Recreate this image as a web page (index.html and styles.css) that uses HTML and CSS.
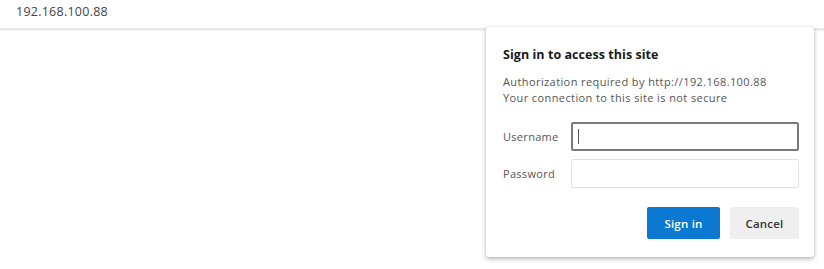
FILE: index.html
```html
<!DOCTYPE html>
<html>
<head>
<meta charset="utf-8">
<link rel="stylesheet" href="styles.css">
</head>
<body>
<div class="topbar"><span class="addr">192.168.100.88</span></div>
<div class="sep"></div>
<div class="dialog">
  <div class="title">Sign in to access this site</div>
  <div class="info">
    <div>Authorization required by http://192.168.100.88</div>
    <div>Your connection to this site is not secure</div>
  </div>
  <div class="row first">
    <label class="lbl">Username</label>
    <div class="input focused"><span class="caret"></span></div>
  </div>
  <div class="row">
    <label class="lbl">Password</label>
    <div class="input"></div>
  </div>
  <div class="buttons">
    <div class="btn primary">Sign in</div>
    <div class="btn secondary">Cancel</div>
  </div>
</div>
</body>
</html>
```
FILE: styles.css
```css
html, body {
  margin: 0;
  padding: 0;
  background: #ffffff;
  font-family: "Open Sans", "Noto Sans", sans-serif;
  color: #333;
}
body {
  width: 824px;
  height: 269px;
  position: relative;
  overflow: hidden;
}
.topbar {
  height: 28px;
  display: flex;
  align-items: center;
  padding-left: 16px;
}
.addr {
  font-size: 12.5px;
  color: #444;
  letter-spacing: 0.25px;
  margin-top: -5px;
}
.sep {
  height: 3px;
  background: linear-gradient(to bottom, #e4e4e4, #f3f3f3);
}
.dialog {
  position: absolute;
  left: 486px;
  top: 27px;
  width: 328px;
  height: 230px;
  box-sizing: border-box;
  background: #fff;
  border-radius: 3px;
  box-shadow: 0 2px 5px rgba(0,0,0,0.28), 0 0 2px rgba(0,0,0,0.12);
  padding: 19px 15px 0 17px;
}
.title {
  font-size: 12.5px;
  font-weight: 700;
  color: #1a1a1a;
  line-height: 18px;
  letter-spacing: 0.05px;
}
.info {
  margin-top: 10px;
  font-size: 11px;
  line-height: 16px;
  color: #555;
  letter-spacing: 0.4px;
}
.row {
  display: flex;
  align-items: center;
  margin-top: 8px;
}
.row.first {
  margin-top: 16px;
}
.lbl {
  width: 68px;
  font-size: 11px;
  color: #555;
  letter-spacing: 0.3px;
}
.input {
  width: 228px;
  height: 29px;
  box-sizing: border-box;
  border: 1px solid #e2e2e2;
  border-radius: 2px;
  background: #fff;
  display: flex;
  align-items: center;
}
.input.focused {
  border: 2px solid #7a7a7a;
}
.caret {
  width: 1px;
  height: 15px;
  background: #555;
  margin-left: 5px;
}
.buttons {
  display: flex;
  justify-content: flex-end;
  gap: 10px;
  margin-top: 19px;
}
.btn {
  height: 32px;
  display: flex;
  align-items: center;
  justify-content: center;
  font-size: 11.5px;
  border-radius: 2px;
  letter-spacing: 0.2px;
}
.btn.primary {
  width: 73px;
  background: #0b78d2;
  color: #fff;
  font-weight: 600;
}
.btn.secondary {
  width: 69px;
  background: #efefef;
  color: #333;
  font-weight: 600;
}
```
